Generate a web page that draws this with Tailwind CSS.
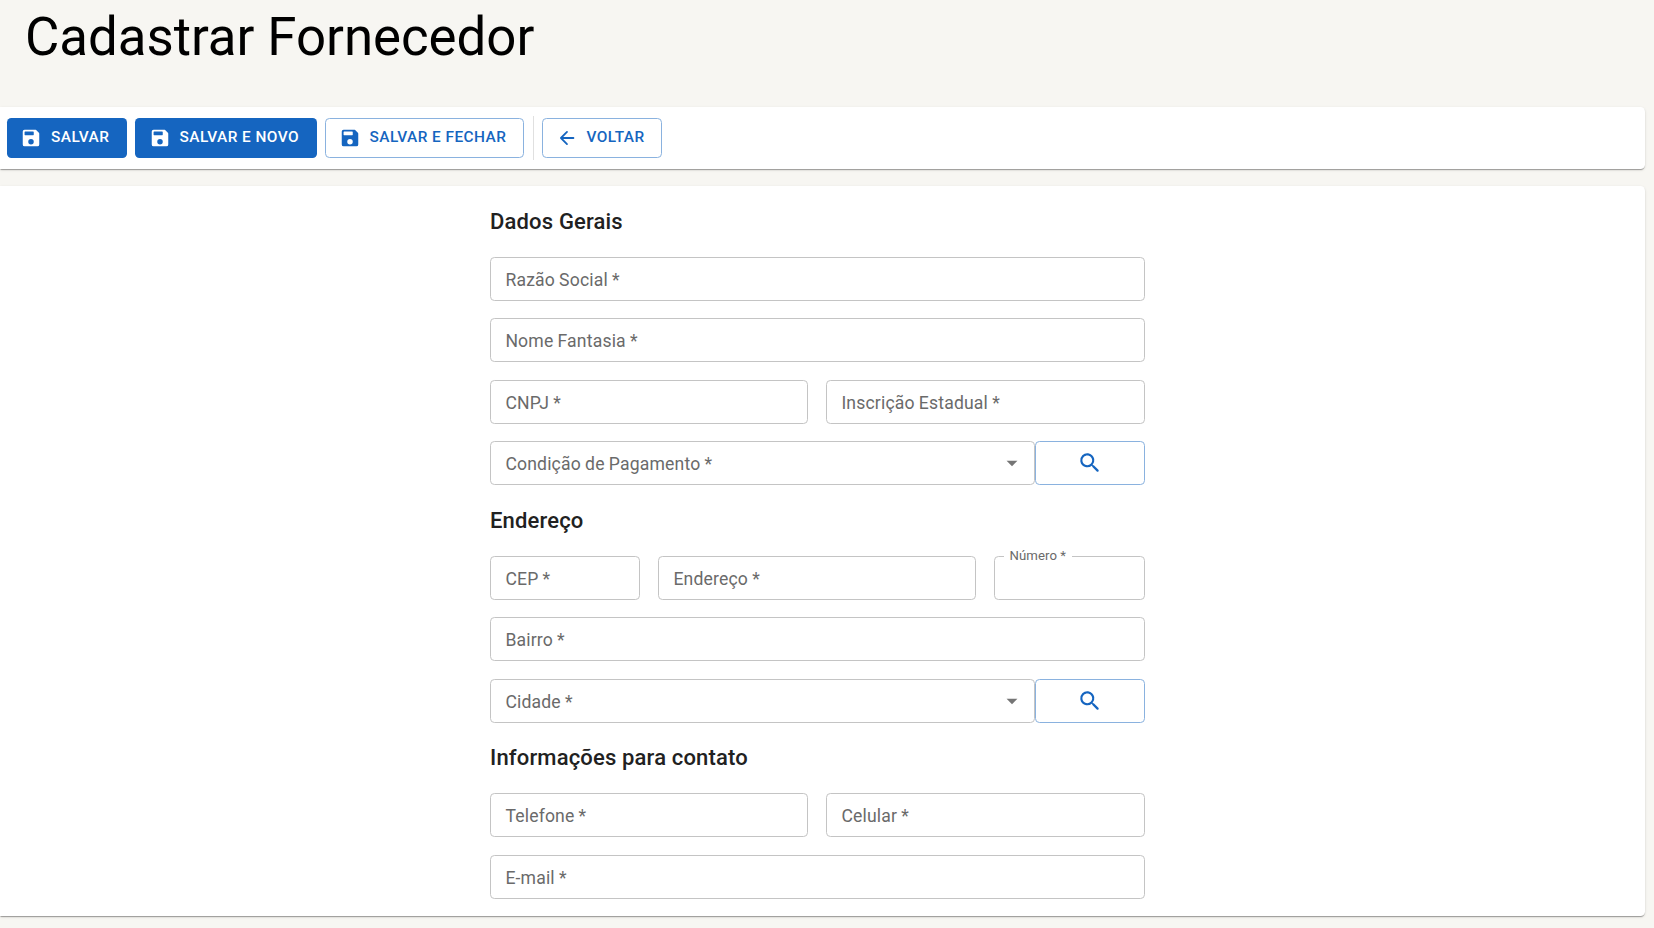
<!DOCTYPE html>
<html lang="pt-BR">
<head>
<meta charset="utf-8">
<title>Cadastrar Fornecedor</title>
<script src="https://cdn.jsdelivr.net/npm/@tailwindcss/browser@4"></script>
</head>
<body class="h-screen overflow-hidden bg-[#f7f6f2] font-[Roboto,sans-serif] text-[17.6px] tracking-[0.165px] text-[#6a6a6a]">
<svg class="hidden">
  <symbol id="save" viewBox="0 0 24 24"><path fill-rule="evenodd" d="M17.6 3.4 20.6 6.4C20.9 6.7 21 7 21 7.4V19a2 2 0 0 1-2 2H5a2 2 0 0 1-2-2V5a2 2 0 0 1 2-2H16.6C17 3 17.3 3.1 17.6 3.4ZM12 19a3 3 0 1 0 0-6 3 3 0 0 0 0 6ZM5.5 9H14.5a.5.5 0 0 0 .5-.5V5.5a.5.5 0 0 0-.5-.5H5.5a.5.5 0 0 0-.5.5V8.5a.5.5 0 0 0 .5.5Z"/></symbol>
  <symbol id="back" viewBox="0 0 24 24"><path d="M19 11H7.83l4.88-4.88c.39-.39.39-1.03 0-1.42a1 1 0 0 0-1.41 0l-6.59 6.59a1 1 0 0 0 0 1.41l6.59 6.59a1 1 0 0 0 1.41-1.41L7.83 13H19a1 1 0 0 0 0-2Z"/></symbol>
  <symbol id="search" viewBox="0 0 24 24"><path d="M15.5 14h-.79l-.28-.27a6.5 6.5 0 0 0 1.48-5.34c-.47-2.78-2.79-5-5.59-5.34a6.505 6.505 0 0 0-7.27 7.27c.34 2.8 2.56 5.12 5.34 5.59a6.5 6.5 0 0 0 5.34-1.48l.27.28v.79l4.25 4.25c.41.41 1.08.41 1.49 0 .41-.41.41-1.08 0-1.49L15.5 14Zm-6 0C7.01 14 5 11.99 5 9.5S7.01 5 9.5 5 14 7.01 14 9.5 11.99 14 9.5 14Z"/></symbol>
</svg>

<h1 class="h-[107px] pt-[6px] pl-[25px] text-[52.8px] leading-[62px] font-normal tracking-[-0.03px] text-black">Cadastrar Fornecedor</h1>

<div class="mr-[9px] flex h-[62px] items-center rounded-r-[4.4px] bg-white pl-[7px] text-[15.4px] font-medium tracking-[0.44px] text-[#1565c0] shadow-[0_2px_1px_-1px_rgba(0,0,0,0.2),0_1px_1px_0_rgba(0,0,0,0.14),0_1px_3px_0_rgba(0,0,0,0.12)]">
  <button class="mr-2 flex h-10 w-[120px] items-center rounded-[4.4px] bg-[#1565c0] pl-[13px] text-white"><svg class="mr-[9px] size-[22px] fill-current"><use href="#save"/></svg><span class="-mt-px">SALVAR</span></button>
  <button class="mr-2 flex h-10 w-[182px] items-center rounded-[4.4px] bg-[#1565c0] pl-[13.5px] text-white"><svg class="mr-[9px] size-[22px] fill-current"><use href="#save"/></svg><span class="-mt-px">SALVAR E NOVO</span></button>
  <button class="mr-[9px] flex h-10 w-[199px] items-center rounded-[4.4px] border border-[#8ab2df] pl-[12.5px]"><svg class="mr-[9px] size-[22px] fill-current"><use href="#save"/></svg><span class="-mt-px">SALVAR E FECHAR</span></button>
  <div class="mr-2 h-11 w-px bg-[#e0e0e0]"></div>
  <button class="flex h-10 w-[120px] items-center rounded-[4.4px] border border-[#8ab2df] pl-[12.5px]"><svg class="mr-[9px] size-[22px] fill-current"><use href="#back"/></svg><span class="-mt-px">VOLTAR</span></button>
</div>

<main class="mt-[17px] mr-[9px] h-[730px] rounded-r-[4.4px] bg-white pt-[17.8px] pl-[490px] shadow-[0_2px_1px_-1px_rgba(0,0,0,0.2),0_1px_1px_0_rgba(0,0,0,0.14),0_1px_3px_0_rgba(0,0,0,0.12)]">
  <form class="flex w-[655px] flex-col gap-[17.6px] [word-spacing:-0.4px]">
    <h2 class="h-[35.2px] text-[22px] leading-[35.2px] font-medium text-[#212121] [word-spacing:0px]">Dados Gerais</h2>
    <div class="flex h-11 items-center rounded-[4.4px] border border-[#c4c4c4] pt-[3px] pl-[14.4px]">Razão Social *</div>
    <div class="flex h-11 items-center rounded-[4.4px] border border-[#c4c4c4] pt-[2px] pl-[14.4px]">Nome Fantasia *</div>
    <div class="grid grid-cols-[318px_319px] gap-[18px]">
      <div class="flex h-11 items-center rounded-[4.4px] border border-[#c4c4c4] pt-[2px] pl-[14.4px]">CNPJ *</div>
      <div class="flex h-11 items-center rounded-[4.4px] border border-[#c4c4c4] pt-[2px] pl-[14.4px]">Inscrição Estadual *</div>
    </div>
    <div class="flex">
      <div class="flex h-11 w-[545px] items-center justify-between rounded-[4.4px] border border-[#c4c4c4] pr-[9px] pl-[14.4px]"><span class="pt-[2px]">Condição de Pagamento *</span><svg class="size-[26px] fill-[#757575]" viewBox="0 0 24 24"><path d="m7 10 5 5 5-5z"/></svg></div>
      <button class="flex h-11 w-[110px] items-center justify-center rounded-[4.4px] border border-[#8ab2df]"><svg class="size-[26px] fill-[#1565c0]"><use href="#search"/></svg></button>
    </div>
    <h2 class="h-[35.2px] text-[22px] leading-[35.2px] font-medium text-[#212121]">Endereço</h2>
    <div class="flex gap-[18px]">
      <div class="flex h-11 w-[150px] items-center rounded-[4.4px] border border-[#c4c4c4] pt-[2px] pl-[14.4px]">CEP *</div>
      <div class="flex h-11 flex-1 items-center rounded-[4.4px] border border-[#c4c4c4] pt-[2px] pl-[14.4px]">Endereço *</div>
      <div class="relative h-11 w-[151px] rounded-[4.4px] border border-[#c4c4c4]"><span class="absolute -top-[9px] left-[9px] w-[68px] bg-white pl-[5.4px] text-[13.2px] leading-4 tracking-[0.124px]">Número *</span></div>
    </div>
    <div class="flex h-11 items-center rounded-[4.4px] border border-[#c4c4c4] pt-[2px] pl-[14.4px]">Bairro *</div>
    <div class="flex">
      <div class="flex h-11 w-[545px] items-center justify-between rounded-[4.4px] border border-[#c4c4c4] pr-[9px] pl-[14.4px]"><span class="pt-[2px]">Cidade *</span><svg class="size-[26px] fill-[#757575]" viewBox="0 0 24 24"><path d="m7 10 5 5 5-5z"/></svg></div>
      <button class="flex h-11 w-[110px] items-center justify-center rounded-[4.4px] border border-[#8ab2df]"><svg class="size-[26px] fill-[#1565c0]"><use href="#search"/></svg></button>
    </div>
    <h2 class="h-[35.2px] text-[22px] leading-[34px] font-medium text-[#212121] [word-spacing:0px]">Informações para contato</h2>
    <div class="grid grid-cols-[318px_319px] gap-[18px]">
      <div class="flex h-11 items-center rounded-[4.4px] border border-[#c4c4c4] pt-[2px] pl-[14.4px]">Telefone *</div>
      <div class="flex h-11 items-center rounded-[4.4px] border border-[#c4c4c4] pt-[2px] pl-[14.4px]">Celular *</div>
    </div>
    <div class="flex h-11 items-center rounded-[4.4px] border border-[#c4c4c4] pt-[2px] pl-[14.4px]">E-mail *</div>
  </form>
</main>
</body>
</html>
